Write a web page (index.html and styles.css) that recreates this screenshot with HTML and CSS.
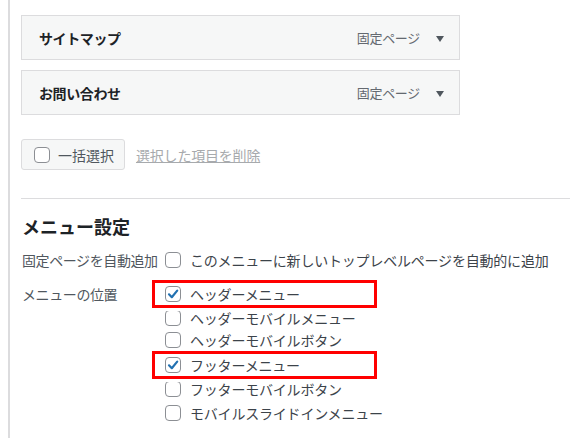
FILE: index.html
```html
<!DOCTYPE html>
<html lang="ja">

<head>
    <meta charset="UTF-8">
    <title>メニュー</title>
    <link rel="stylesheet" href="styles.css">
</head>

<body>
    <div class="admin">
        <ul class="menu-items">
            <li class="item">
                <span class="item-title">サイトマップ</span>
                <span class="item-type">固定ページ</span>
                <span class="caret"></span>
            </li>
            <li class="item">
                <span class="item-title">お問い合わせ</span>
                <span class="item-type">固定ページ</span>
                <span class="caret"></span>
            </li>
        </ul>

        <div class="bulk">
            <label class="bulk-btn"><span class="cb"></span>一括選択</label>
            <a class="delete-link">選択した項目を削除</a>
        </div>

        <div class="settings">
            <h3 class="settings-title">メニュー設定</h3>

            <div class="setting-row">
                <div class="setting-label">固定ページを自動追加</div>
                <div class="opts">
                    <label class="opt"><span class="cb"></span>このメニューに新しいトップレベルページを自動的に追加</label>
                </div>
            </div>

            <div class="setting-row locations">
                <div class="setting-label">メニューの位置</div>
                <div class="opts loc-list">
                    <label class="opt marked">
                        <span class="cb on"><svg width="16" height="16" viewBox="0 0 16 16"><path d="M4 8.3 L6.8 11.2 L12.2 4.6" fill="none" stroke="#2271b1" stroke-width="2.2" stroke-linecap="round" stroke-linejoin="round"/></svg></span>ヘッダーメニュー
                    </label>
                    <label class="opt r2"><span class="cb"></span>ヘッダーモバイルメニュー</label>
                    <label class="opt r3"><span class="cb"></span>ヘッダーモバイルボタン</label>
                    <label class="opt marked m2">
                        <span class="cb on"><svg width="16" height="16" viewBox="0 0 16 16"><path d="M4 8.3 L6.8 11.2 L12.2 4.6" fill="none" stroke="#2271b1" stroke-width="2.2" stroke-linecap="round" stroke-linejoin="round"/></svg></span>フッターメニュー
                    </label>
                    <label class="opt r5"><span class="cb"></span>フッターモバイルボタン</label>
                    <label class="opt r6"><span class="cb"></span>モバイルスライドインメニュー</label>
                </div>
            </div>
        </div>
    </div>
</body>

</html>
```

FILE: styles.css
```css
html,
body {
    margin: 0;
    padding: 0;
    background: #fff;
}

body {
    font-family: "Noto Sans CJK JP", "Noto Sans", sans-serif;
    font-size: 14px;
    color: #3c434a;
    overflow: hidden;
}

.admin {
    margin-left: 8px;
    border-left: 2px solid #dcdcde;
    padding: 15px 0 0 11px;
    height: 438px;
    box-sizing: border-box;
}

/* menu items */
.menu-items {
    list-style: none;
    margin: 0;
    padding: 0;
}

.item {
    display: flex;
    align-items: center;
    width: 439px;
    height: 45px;
    box-sizing: border-box;
    margin-bottom: 10px;
    padding: 0 15px 0 17px;
    background: #f6f7f7;
    border: 1px solid #dcdcde;
}

.item-title {
    flex: 1;
    font-weight: bold;
    color: #1d2327;
    letter-spacing: -0.4px;
}

.item-type {
    font-size: 13px;
    color: #646970;
    letter-spacing: -0.3px;
}

.caret {
    width: 0;
    height: 0;
    margin-left: 16px;
    margin-top: 2px;
    border-left: 4px solid transparent;
    border-right: 4px solid transparent;
    border-top: 6px solid #50575e;
}

/* bulk select */
.bulk {
    display: flex;
    align-items: center;
    margin-top: 24px;
    gap: 11px;
}

.bulk-btn {
    display: flex;
    align-items: center;
    gap: 8px;
    width: 104px;
    height: 31px;
    box-sizing: border-box;
    padding-left: 12px;
    background: #f6f7f7;
    border: 1px solid #dcdcde;
    border-radius: 3px;
    color: #50575e;
}

.delete-link {
    color: #a7aaad;
    text-decoration: underline;
    letter-spacing: -0.2px;
}

/* checkbox */
.cb {
    display: inline-block;
    flex: none;
    width: 16px;
    height: 16px;
    box-sizing: border-box;
    border: 1px solid #8c8f94;
    border-radius: 4px;
    background: #fff;
    position: relative;
}

.cb svg {
    position: absolute;
    left: -1px;
    top: -1px;
}

/* settings */
.settings {
    margin-top: 28px;
    border-top: 1px solid #dcdcde;
}

.settings-title {
    margin: 15px 0 0 1px;
    font-size: 18px;
    line-height: 24px;
    font-weight: bold;
    color: #1d2327;
}

.setting-row {
    display: grid;
    grid-template-columns: 144px 1fr;
    margin-top: 10px;
    line-height: 24px;
}

.setting-row.locations {
    margin-top: 8px;
}

.setting-label {
    padding-left: 1px;
    color: #50575e;
    letter-spacing: -0.4px;
}

.locations .setting-label {
    line-height: 28px;
}

.opt {
    display: flex;
    align-items: center;
    gap: 9px;
    white-space: nowrap;
    letter-spacing: -0.2px;
}

.loc-list {
    display: flex;
    flex-direction: column;
}

.loc-list .opt {
    height: 22px;
    margin-top: -1px;
}

.loc-list .opt.r3 {
    margin-top: 0;
}

.loc-list .opt.r6 {
    margin-top: 2px;
}

/* red frames drawn on the screenshot */
.loc-list .opt.marked {
    position: relative;
    z-index: 1;
    height: 28px;
    width: 225px;
    box-sizing: border-box;
    margin-left: -13px;
    padding-left: 10px;
    border: 3px solid #f00;
    background: #fff;
    box-shadow: 0 0 0 3px #fff;
}

.loc-list .opt.marked:first-child,
.loc-list .opt.m2 {
    margin-top: 0;
}
```
